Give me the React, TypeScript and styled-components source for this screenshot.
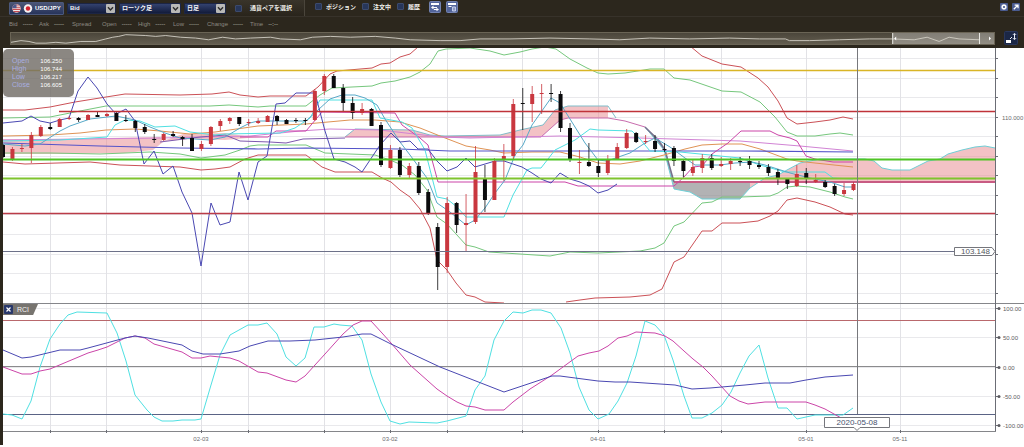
import React from "react";
import styled, { createGlobalStyle } from "styled-components";

const GlobalStyle = createGlobalStyle`
  *, *::before, *::after { box-sizing: border-box; }
  body {
    margin: 0;
    background: #fff;
    font-family: "Liberation Sans", "Noto Sans CJK JP", sans-serif;
  }
`;

const Frame = styled.main`
  background: #2c271d;
`;

const Toolbar = styled.div`
  display: flex;
  align-items: center;
  height: 17px;
  padding: 0 4px 0 9px;
  border-bottom: 1px solid #37322a;
`;

const PairButton = styled.button`
  display: flex;
  align-items: center;
  gap: 2px;
  width: 55px;
  height: 13px;
  padding: 0 2px;
  border: 1px solid #4b587c;
  border-radius: 1px;
  background: linear-gradient(#4b5576, #27345c);
  color: #fff;
  font: bold 6px "Liberation Sans", sans-serif;
  white-space: nowrap;
`;

const SelectBox = styled.label<{ $width: number }>`
  position: relative;
  display: flex;
  width: ${(p) => p.$width}px;
  height: 11px;
  margin-left: 3px;
  border: 1px solid #1c2544;
  background: linear-gradient(#33426f, #131c3c);

  svg {
    position: absolute;
    right: 0;
    top: 0;
    pointer-events: none;
  }
`;

const Select = styled.select`
  appearance: none;
  width: 100%;
  padding: 0 12px 0 2px;
  border: 0;
  background: transparent;
  color: #f2f2f5;
  font: bold 6px "Liberation Sans", "Noto Sans CJK JP", sans-serif;
`;

const PairPicker = styled.div`
  display: flex;
  align-items: center;
  align-self: stretch;
  width: 75px;
  margin-left: 4px;
  padding-left: 5px;
  background: linear-gradient(#39342a, #29241b);
  border-right: 1px solid #4a453b;
`;

const Checks = styled.div`
  display: flex;
  align-items: center;
  gap: 6px;
  padding: 0 9px 3px 10px;
`;

const CheckLabel = styled.label<{ $gap: number }>`
  display: flex;
  align-items: center;
  gap: ${(p) => p.$gap}px;
  color: #f0efec;
  font-size: 6px;
  font-weight: bold;
  line-height: 8px;
  white-space: nowrap;
`;

const CheckBox = styled.input`
  appearance: none;
  width: 7px;
  height: 7px;
  margin: 0;
  border: 1px solid #3c4a6c;
  border-radius: 1px;
  background: #27365a;

  &:checked { background: #6c82bd; }
`;

const IconButton = styled.button<{ $size: number }>`
  display: flex;
  flex: none;
  width: ${(p) => p.$size}px;
  height: ${(p) => p.$size}px;
  padding: 0;
  border: 0;
  background: transparent;

  svg { width: 100%; height: 100%; }
`;

const ToolGroup = styled.div<{ $gap: number }>`
  display: flex;
  gap: ${(p) => p.$gap}px;
  padding-bottom: 3px;
`;

const Spacer = styled.div`
  flex: 1;
`;

const QuoteRow = styled.dl`
  display: flex;
  align-items: center;
  height: 13px;
  margin: 0;
  padding-left: 9px;
  color: #8d8982;
  font-size: 6px;
  line-height: 8px;
  white-space: nowrap;
`;

const Quote = styled.div<{ $width: number }>`
  display: flex;
  gap: 5px;
  width: ${(p) => p.$width}px;

  dt, dd { margin: 0; }
  dd { font-weight: bold; }
`;

const OverviewRow = styled.div`
  display: flex;
  align-items: center;
  gap: 9px;
  height: 18px;
  padding: 0 6px 2px 10px;
`;

const Overview = styled.div`
  display: flex;
  flex: 1;
  height: 13px;
  border: 1px solid #6a6455;
  background: linear-gradient(#4b463b, #635d4f);

  svg { width: 100%; height: 100%; }
`;

const Charts = styled.section`
  margin-left: 3px;
  background: #fff;
`;

const Pane = styled.div`
  position: relative;

  > svg { display: block; width: 100%; height: auto; }
`;

const InfoPanel = styled.dl`
  position: absolute;
  left: 0;
  top: 1px;
  width: 71px;
  height: 48px;
  margin: 0;
  padding: 8px 12px 8px 9px;
  border-radius: 5px;
  background: rgba(113, 109, 102, 0.82);
  font-size: 6px;
`;

const InfoRow = styled.div`
  display: flex;
  justify-content: space-between;
  line-height: 8px;

  dt { color: #a9aee0; font-size: 7px; }
  dd { margin: 0; color: #fff; }
`;

const IndicatorTag = styled.div`
  position: absolute;
  left: 0;
  top: 1px;
  display: flex;
  align-items: center;
  gap: 4px;
  width: 35px;
  height: 11px;
  padding-left: 1px;
  background: #77746f;
  clip-path: polygon(0 0, 100% 0, 86% 100%, 0 100%);
  color: #f4f4f4;
  font-size: 7px;
`;

type Pt = [number, number];
type Line = { color: string; pts: string; w?: number };
// index, rising?, body top, body bottom, wick top, wick bottom
type Candle = [number, 0 | 1, number, number, number, number];

const candles: Candle[] = [
  [0, 0, 145, 157, 144, 158], [1, 1, 149, 159, 147, 161], [2, 1, 148, 149, 144, 152],
  [3, 1, 135, 148, 132, 163], [4, 1, 127, 136, 125, 137], [5, 0, 127, 129, 123, 130],
  [6, 1, 119, 127, 118, 127], [7, 1, 118, 119, 116, 120], [8, 0, 118, 120, 117, 122],
  [9, 1, 115, 120, 114, 120], [10, 0, 115, 117, 112, 117], [11, 1, 114, 116, 113, 117],
  [12, 0, 113, 121, 112, 121], [13, 0, 120, 121, 115, 122], [14, 0, 121, 128, 120, 132],
  [15, 0, 127, 132, 124, 134], [16, 0, 139, 140, 134, 143], [17, 1, 134, 140, 133, 141],
  [18, 0, 134, 136, 131, 137], [19, 0, 137, 139, 136, 146], [20, 0, 138, 151, 134, 151],
  [21, 1, 144, 149, 141, 151], [22, 1, 127, 144, 126, 146], [23, 1, 121, 126, 119, 131],
  [24, 1, 118, 121, 117, 124], [25, 0, 117, 124, 117, 126], [26, 1, 122, 123, 119, 126],
  [27, 1, 121, 123, 118, 124], [28, 1, 116, 122, 115, 122], [29, 0, 116, 121, 115, 125],
  [30, 0, 120, 124, 119, 124], [31, 0, 120, 121, 118, 123], [32, 0, 120, 121, 118, 125],
  [33, 1, 91, 120, 89, 121], [34, 1, 76, 91, 74, 95], [35, 0, 76, 88, 74, 88],
  [36, 0, 88, 103, 84, 111], [37, 0, 103, 113, 97, 119], [38, 1, 109, 113, 103, 115],
  [39, 0, 109, 126, 108, 126], [40, 0, 125, 165, 122, 167], [41, 1, 150, 168, 145, 169],
  [42, 0, 150, 175, 147, 177], [43, 1, 166, 175, 163, 178], [44, 0, 166, 193, 162, 195],
  [45, 0, 192, 214, 189, 215], [46, 0, 227, 267, 223, 290], [47, 1, 203, 267, 197, 273],
  [48, 0, 203, 225, 202, 233], [49, 1, 223, 225, 194, 252], [50, 1, 172, 222, 146, 224],
  [51, 0, 178, 200, 165, 212], [52, 1, 161, 200, 158, 200], [53, 1, 156, 160, 144, 181],
  [54, 1, 104, 156, 99, 159], [55, 0, 103, 104, 88, 130], [56, 1, 94, 104, 86, 122],
  [57, 1, 93, 94, 84, 114], [58, 0, 93, 94, 84, 102], [59, 0, 94, 128, 91, 132],
  [60, 0, 128, 159, 123, 162], [61, 1, 162, 163, 150, 174], [62, 0, 162, 166, 143, 167],
  [63, 0, 166, 173, 159, 177], [64, 1, 159, 173, 155, 175], [65, 1, 147, 159, 143, 159],
  [66, 1, 133, 148, 129, 149], [67, 0, 133, 142, 132, 143], [68, 1, 141, 142, 135, 144],
  [69, 0, 141, 149, 135, 152], [70, 0, 149, 150, 143, 152], [71, 0, 148, 161, 146, 166],
  [72, 0, 161, 171, 160, 177], [73, 1, 167, 173, 160, 176], [74, 1, 158, 168, 154, 173],
  [75, 0, 158, 168, 154, 170], [76, 1, 164, 166, 157, 167], [77, 1, 161, 164, 158, 170],
  [78, 0, 161, 162, 157, 166], [79, 0, 161, 165, 156, 169], [80, 0, 165, 167, 161, 169],
  [81, 0, 167, 173, 164, 176], [82, 0, 172, 178, 169, 185], [83, 0, 179, 184, 178, 189],
  [84, 1, 174, 186, 165, 187], [85, 0, 173, 178, 168, 184], [86, 1, 180, 182, 174, 183],
  [87, 0, 182, 187, 180, 188], [88, 0, 186, 194, 184, 196], [89, 1, 190, 194, 183, 196],
  [90, 1, 184, 190, 182, 191],
];

const RED = "#cb5157";
const GREEN = "#76c77d";
const CYAN = "#4fe0e2";
const MAGENTA = "#cb45a8";
const NAVY = "#4a48b2";

const priceLines: Line[] = [
  { color: RED, pts: "3,110 25,110 50,107 75,102 106,97 125,94 180,95 212,94 229,92 240,95 258,97 270,96 306,96 318,87 330,74 337,71 372,68 381,64 390,63 400,57 410,54 418,47" },
  { color: RED, pts: "690,46 702,56 712,60 722,64 741,67 758,78 768,87 778,101 787,118 797,124 815,122 830,120 843,117 853,119" },
  { color: GREEN, pts: "3,118 50,117 80,111 106,106 210,106 229,105 258,107 270,106 306,106 320,95 332,88 372,86 381,83 395,81 410,77 420,72 430,64 438,51 446,49 470,48 490,51 504,55 520,52 532,49 545,47 556,49 570,59 587,68 598,73 608,74 625,73 650,69 664,69 674,78 690,80 722,91 741,92 760,102 775,117 787,132 797,136 815,136 830,134 840,133 853,135" },
  { color: RED, pts: "3,162 25,164 90,162 120,165 180,167 201,170 215,169 230,167 245,159 258,155 306,155 322,167 335,172 372,172 382,178 391,182 400,190 410,197 420,209 430,228 437,260 447,270 456,283 466,295 475,297 485,302 504,303" },
  { color: RED, pts: "566,302 580,300 595,298 630,297 650,295 662,289 674,262 684,257 702,231 712,231 722,223 740,223 758,221 770,216 778,211 787,200 797,198 815,202 830,207 845,214 853,215" },
  { color: GREEN, pts: "3,153 50,153 100,154 125,153 150,152 180,154 201,158 225,155 240,150 250,146 258,145 306,145 325,153 375,155 390,160 402,165 415,175 427,190 437,217 447,224 466,245 475,247 489,252 520,254 550,256 570,252 598,253 640,251 655,248 664,243 674,226 684,222 702,203 712,202 722,197 740,197 770,196 778,193 787,187 797,186 810,187 830,192 845,197 853,199" },
  { color: "#df9355", pts: "3,136 50,135 80,133 106,130 135,129 160,131 190,134 215,132 258,126 306,124 350,120 375,120 400,122 420,128 440,136 466,146 490,150 504,153 532,152 560,152 580,157 598,163 620,164 640,161 664,155 685,149 702,145 722,144 742,144 760,149 787,159 797,161 815,163 853,167" },
  { color: "#d183d4", pts: "3,140 80,139 160,138 250,136 300,131 330,129 380,130 440,137 470,138 560,136 600,137 640,138 740,141 800,146 853,151" },
  { color: "#5454c9", w: 1.2, pts: "3,143 100,146 180,148 258,149 306,148 400,149 450,151 600,151 740,151 853,152" },
  { color: "#7d58ae", pts: "160,142 200,137 225,135 240,141 270,142 286,143 303,139 345,138" },
  { color: MAGENTA, pts: "240,137 268,137 276,131 306,131 322,112 395,113 402,125 420,138 428,145 438,182 565,182 578,186 674,186 684,177 693,167 702,166 712,154 728,143 741,131 770,131 778,135 790,138 797,141 806,156 815,159 833,162 853,162" },
  { color: CYAN, pts: "3,141 60,140 107,137 115,125 125,120 140,121 155,127 175,126 190,132 215,135 225,134 280,133 295,128 310,118 320,100 372,100 380,118 402,122 412,128 425,150 437,197 447,199 457,207 466,217 504,217 513,195 527,170 532,168 541,168 555,150 575,140 590,129 598,130 632,131 640,139 650,151 680,152 720,156 740,158 760,165 785,172 825,172 833,178 853,179" },
  { color: "#57a9c8", pts: "3,144 25,146 40,144 60,131 70,126 90,119 116,116 135,120 150,127 165,133 180,138 210,140 225,137 240,128 250,123 258,121 306,121 318,110 330,99 342,95 355,95 365,98 377,105 385,119 400,142 410,155 427,178 437,203 450,212 466,225 475,220 485,208 495,193 505,180 515,155 523,145 532,125 551,98 560,103 575,127 585,143 598,160 607,161 630,153 645,143 655,138 670,147 685,158 695,165 720,165 735,163 752,162 765,165 790,173 810,178 830,182 845,187 853,187" },
  { color: NAVY, pts: "3,123 22,121 31,116 40,121 50,123 60,120 69,118 78,91 88,77 97,88 107,104 116,114 126,109 135,121 144,164 154,151 163,174 173,166 182,192 192,213 201,266 211,203 220,225 230,222 239,172 248,200 258,162 267,156 276,104 285,103 296,93 315,93 325,131 334,159 345,162 355,167 362,172 370,160 380,145 391,133 400,142 410,141 418,149 428,149 437,161 447,171 457,167 466,158 475,167 495,161 504,161 522,167 532,173 541,179 551,183 560,173 570,179 580,182 589,186 598,193 608,190 617,184" },
];

const rciLines: Line[] = [
  { color: CYAN, pts: "3,414 12,415 22,419 31,401 40,367 50,339 60,324 68,315 77,312 107,313 117,333 126,361 135,395 147,410 154,417 162,421 173,421 182,420 195,420 201,419 211,385 220,355 230,335 248,325 258,325 267,323 277,334 286,357 296,366 305,358 314,327 324,327 334,324 340,325 352,326 362,340 371,374 381,402 390,421 400,424 409,422 437,423 447,421 466,416 475,390 485,376 494,340 504,321 513,312 523,313 532,310 541,310 551,313 561,328 570,353 579,387 589,410 598,419 609,414 618,401 627,383 636,356 645,321 655,325 664,335 673,360 684,396 692,418 702,418 712,413 722,405 731,392 740,373 749,356 759,345 768,378 778,408 787,408 797,419 815,415 843,415 853,408" },
  { color: MAGENTA, pts: "3,367 22,374 31,374 40,371 50,369 69,361 88,353 98,350 107,347 125,338 135,336 145,338 154,344 182,352 192,358 201,358 210,356 230,358 239,361 258,372 267,373 286,380 296,382 305,376 325,354 343,334 353,325 362,321 371,321 382,333 391,343 410,365 428,381 437,389 447,396 457,402 466,406 475,407 485,410 504,410 513,402 530,389 552,375 578,356 589,353 599,351 608,346 618,338 627,336 636,332 655,333 665,336 673,341 684,351 693,359 703,367 712,376 730,396 739,401 748,404 765,402 806,402 815,405 825,409 843,419" },
  { color: NAVY, pts: "3,350 22,358 31,357 60,350 80,350 88,348 125,338 135,336 148,338 182,345 192,351 203,354 220,354 239,351 250,346 268,341 290,341 315,340 343,337 362,334 371,334 391,344 440,367 504,392 552,376 560,376 598,381 615,382 630,382 675,385 692,389 710,388 745,385 765,383 790,383 806,380 825,377 853,375" },
];

const overviewWave =
  "0,11 10,9 18,10 25,12 35,12 45,11 55,12 70,10 85,10 95,7 102,5 108,4 115,2 135,3 145,4 155,3 170,5 185,6 198,8 212,5 225,7 240,6 260,5 270,7 290,8 302,5 320,4 340,5 365,4 385,6 400,8 430,9 450,9 470,7 500,7 540,6 580,7 610,8 640,6 680,7 720,6 750,7 776,7 780,9 800,9 830,8 860,7 883,7 905,8 918,5 930,10 940,5 950,7 970,8";

const gridX = [50, 106, 201, 248, 324, 390, 447, 522, 598, 664, 721, 806, 900];
const priceGridY = [58, 78, 97, 117, 136, 156, 175, 195, 214, 234, 254, 273, 293];
const rciScale: [number, string][] = [
  [308, "100.00"],
  [337, "50.00"],
  [367, "0.00"],
  [396, "-50.00"],
  [425, "-100.00"],
];
const dates: Pt[] = [[201, 0], [390, 1], [598, 2], [806, 3], [900, 4]];
const dateNames = ["02-03", "03-02", "04-01", "05-01", "05-11"];

const AXIS = "#6b6d75";

const Polyline = ({ line }: { line: Line }) => (
  <polyline points={line.pts} fill="none" stroke={line.color} strokeWidth={line.w ?? 1} strokeLinejoin="round" />
);

const HLine = ({ y, color, from = 3, to = 995, w = 1 }: { y: number; color: string; from?: number; to?: number; w?: number }) => (
  <line x1={from} x2={to} y1={y + 0.5} y2={y + 0.5} stroke={color} strokeWidth={w} />
);

const VLine = ({ x, color, from, to }: { x: number; color: string; from: number; to: number }) => (
  <line x1={x + 0.5} x2={x + 0.5} y1={from} y2={to} stroke={color} />
);

const CandleMark = ({ c }: { c: Candle }) => {
  const [i, up, top, bottom, high, low] = c;
  const x = 3 + i * 9.45;
  const color = up ? "#c9373f" : "#0b0b0d";
  return (
    <g fill={color}>
      <line x1={x} x2={x} y1={high} y2={low} stroke={color} strokeWidth={0.8} />
      <rect x={x - 2} y={top} width={4} height={bottom - top} />
    </g>
  );
};

const PriceChart = () => (
  <svg viewBox="3 48 1021 255" role="img" aria-label="USD/JPY" fontFamily="Liberation Sans, sans-serif">
    {priceGridY.map((y) => <HLine key={y} y={y} color="#e9e9ec" />)}
    {gridX.map((x) => <VLine key={x} x={x} color="#e2e2e6" from={48} to={303} />)}

    <g fill="#e98f95" fillOpacity="0.55">
      <path d="M3 139 60 139 107 138 160 137 163 142 153 150 125 153 60 154 3 154Z" />
      <path d="M163 141 183 134 225 133 245 136 260 137 225 140 192 139Z" />
      <path d="M345 137 355 129 412 130 430 135 445 136 500 135 520 130 543 125 555 110 568 106 608 106 608 118 568 118 560 120 551 128 541 137Z" />
      <path d="M750 188 765 178 778 175 787 170 800 163 820 159 865 159 874 161 882 168 892 170 910 170 928 161 940 159 948 154 962 150 975 147 985 146 995 148 995 182 750 182Z" />
    </g>
    <path d="M645 127 658 138 665 148 674 182 750 182 750 188 740 199 702 199 690 192 674 189 664 150Z" fill="#8d8d90" fillOpacity="0.68" />
    <polyline points="345,137 355,129 412,130 430,135 445,136 500,135 520,130 543,125 555,110 568,106 608,106 616,118" fill="none" stroke="#7fbcc8" />
    <polyline points="345,137 541,137 551,128 560,120 568,118 608,118 625,121 645,127" fill="none" stroke="#c86cae" />
    <polyline points="645,127 664,150 674,189 690,192 702,199 740,199 750,188 765,178 778,175 787,170 800,163 820,159 865,159 874,161 882,168 892,170 910,170 928,161 940,159 948,154 962,150 975,147 985,146 995,148" fill="none" stroke="#6fcfd6" />
    <polyline points="674,182 995,182" fill="none" stroke="#c85b83" strokeWidth="2" />
    <polyline points="645,127 658,140 665,150 674,182" fill="none" stroke="#77718f" strokeWidth="1.5" />

    {priceLines.map((l) => <Polyline key={l.pts} line={l} />)}
    {candles.map((c) => <CandleMark key={c[0]} c={c} />)}

    <HLine y={70} color="#d9b526" w={1.6} />
    <HLine y={111} color="#bf3339" from={59} w={1.4} />
    <HLine y={159} color="#4fc425" w={1.8} />
    <HLine y={178} color="#7fc42e" w={1.8} />
    <HLine y={213} color="#bb3c48" w={1.4} />
    <HLine y={251} color="#6d7189" to={955} />

    <VLine x={857} color="#77787c" from={48} to={303} />
    <VLine x={995} color={AXIS} from={48} to={303} />
    {priceGridY.map((y) => <HLine key={y} y={y} color={AXIS} from={996} to={998} />)}
    <path d="M954.5 247.500H992L995 251.500 992 255.500H954.500Z" fill="#fff" stroke="#75767c" />
    <text x="961" y="254" fontSize="8" fill="#55575e">103.148</text>
    <text x="1002" y="120" fontSize="6" fill="#6b6b6f">110.000</text>
  </svg>
);

const RciChart = () => (
  <svg viewBox="3 303 1021 142" role="img" aria-label="RCI" fontFamily="Liberation Sans, sans-serif">
    {rciScale.map(([y]) => <HLine key={y} y={y} color="#e9e9ec" />)}
    {gridX.map((x) => <VLine key={x} x={x} color="#e2e2e6" from={303} to={431} />)}
    <HLine y={303} color="#85868a" to={1024} />
    <HLine y={320} color="#b9686c" />
    <HLine y={366} color="#8b8b8d" />
    <HLine y={414} color="#5a6385" />
    {rciLines.map((l) => <Polyline key={l.pts} line={l} />)}

    <VLine x={857} color="#77787c" from={303} to={414} />
    <VLine x={995} color={AXIS} from={303} to={431} />
    <HLine y={431} color="#85868a" to={996} />
    {gridX.map((x) => <VLine key={x} x={x} color={AXIS} from={430} to={433} />)}

    {rciScale.map(([y, label]) => (
      <g key={label} fill="#5b5b60">
        <HLine y={y} color={AXIS} from={996} to={999} />
        <circle cx="999" cy={y + 0.5} r="1.5" />
        <text x="1003" y={y + 3} fontSize="6">{label}</text>
      </g>
    ))}
    {dates.map(([x, n]) => (
      <text key={x} x={x} y="441" fontSize="6" fill="#6b6b6f" textAnchor="middle">{dateNames[n]}</text>
    ))}
    <path d="M824.5 417.500H889.500V427.500H860L857 430.500 854 427.500H824.500Z" fill="#fff" stroke="#75767c" />
    <text x="857" y="425" fontSize="8" fill="#45506d" textAnchor="middle">2020-05-08</text>
  </svg>
);

const Flags = () => (
  <svg width="21" height="9" viewBox="0 0 21 9" aria-hidden="true">
    <defs>
      <clipPath id="us"><circle cx="4.500" cy="4.500" r="4.200" /></clipPath>
    </defs>
    <g clipPath="url(#us)">
      <rect width="9" height="9" fill="#f2e8e8" />
      <path d="M0 1H9M0 3.200H9M0 5.400H9M0 7.600H9" stroke="#c44a50" strokeWidth="1.100" />
      <rect width="4.500" height="4.200" fill="#4d5a8e" />
    </g>
    <circle cx="16" cy="4.500" r="4.200" fill="#f5f1f1" />
    <circle cx="16" cy="4.500" r="2.200" fill="#d3202c" />
  </svg>
);

const DropArrow = () => (
  <svg width="9" height="9" viewBox="0 0 9 9" aria-hidden="true">
    <rect width="9" height="9" rx="1" fill="#b9b9b7" />
    <path d="M2 3.200 4.500 6 7 3.200" fill="none" stroke="#2d2d2d" strokeWidth="1.400" />
  </svg>
);

const ToolIcon = ({ kind }: { kind: "reset" | "delete" }) => (
  <svg viewBox="0 0 12 12" aria-hidden="true">
    <rect x="0.500" y="0.500" width="11" height="11" rx="1" fill="#53659b" stroke="#7382b0" />
    <path d="M2 3H10" stroke="#fff" strokeWidth="2" fill="none" />
    {kind === "reset" ? (
      <>
        <path d="M2 6.500 4.500 4.500V6H8V7H4.500V8.500Z" fill="#fff" />
        <path d="M10 8.500 7.500 6.800V8H5V9H7.500V10.300Z" fill="#fff" />
      </>
    ) : (
      <>
        <path d="M2.500 5.500H5.500" stroke="#fff" fill="none" />
        <path d="M6.500 6H9.500V10H6.500ZM8 6V10" stroke="#cdd6f0" fill="none" strokeWidth="0.900" />
      </>
    )}
  </svg>
);

const GearIcon = () => (
  <svg viewBox="0 0 9 9" aria-hidden="true">
    <rect width="9" height="9" rx="1" fill="#4a5b90" />
    <circle cx="4.500" cy="4.500" r="2" fill="none" stroke="#fff" strokeWidth="1.500" />
    <path d="M4.500 1V2M4.500 7V8M1 4.500H2M7 4.500H8M2 2 2.700 2.700M6.300 6.300 7 7M7 2 6.300 2.700M2.700 6.300 2 7" stroke="#fff" strokeWidth="1.200" />
  </svg>
);

const PopOutIcon = () => (
  <svg viewBox="0 0 9 9" aria-hidden="true">
    <rect width="9" height="9" rx="1" fill="#4a5b90" />
    <path d="M2 7 6.500 2.500M3 2.300H6.800V6" fill="none" stroke="#fff" strokeWidth="1.400" />
  </svg>
);

const ScaleIcon = () => (
  <svg viewBox="0 0 14 14" aria-hidden="true">
    <rect x="0.500" y="0.500" width="13" height="13" rx="1" fill="#1b2746" stroke="#29365b" />
    <path d="M2 9H7V12H2Z" fill="#fff" />
    <path d="M6 8 8 6M10.500 3V8M9 3.800 10.500 2.300 12 3.800M9 7.200 10.500 8.700 12 7.200" fill="none" stroke="#e8ecf5" />
  </svg>
);

const quotes: { name: string; value: string; width: number }[] = [
  { name: "Bid", value: "-----", width: 30 },
  { name: "Ask", value: "-----", width: 33 },
  { name: "Spread", value: "", width: 30 },
  { name: "Open", value: "-----", width: 36 },
  { name: "High", value: "-----", width: 35 },
  { name: "Low", value: "-----", width: 34 },
  { name: "Change", value: "-----", width: 43 },
  { name: "Time", value: "--:--", width: 40 },
];

const ohlc = [["Open", "106.250"], ["High", "106.744"], ["Low", "106.217"], ["Close", "106.605"]];

const Dropdown = ({ label, option, width }: { label: string; option: string; width: number }) => (
  <SelectBox $width={width}>
    <Select aria-label={label} defaultValue={option}>
      <option>{option}</option>
    </Select>
    <DropArrow />
  </SelectBox>
);

const Check = ({ text, gap = 6 }: { text: string; gap?: number }) => (
  <CheckLabel $gap={gap}>
    <CheckBox type="checkbox" />
    {text}
  </CheckLabel>
);

export default function App() {
  return (
    <>
      <GlobalStyle />
      <Frame>
        <Toolbar>
          <PairButton type="button"><Flags />USD/JPY</PairButton>
          <Dropdown label="Price" option="Bid" width={49} />
          <Dropdown label="Chart type" option="ローソク足" width={62} />
          <Dropdown label="Period" option="日足" width={42} />
          <PairPicker><Check text="通貨ペアを選択" gap={8} /></PairPicker>
          <Checks>
            <Check text="ポジション" gap={4} />
            <Check text="注文中" gap={4} />
            <Check text="履歴" gap={4} />
          </Checks>
          <ToolGroup $gap={5}>
            <IconButton type="button" $size={12} aria-label="Reset drawings"><ToolIcon kind="reset" /></IconButton>
            <IconButton type="button" $size={12} aria-label="Delete drawings"><ToolIcon kind="delete" /></IconButton>
          </ToolGroup>
          <Spacer />
          <ToolGroup $gap={4}>
            <IconButton type="button" $size={8} aria-label="Settings"><GearIcon /></IconButton>
            <IconButton type="button" $size={8} aria-label="Open in a window"><PopOutIcon /></IconButton>
          </ToolGroup>
        </Toolbar>

        <QuoteRow>
          {quotes.map((q) => (
            <Quote key={q.name} $width={q.width}>
              <dt>{q.name}</dt>
              <dd>{q.value}</dd>
            </Quote>
          ))}
        </QuoteRow>

        <OverviewRow>
          <Overview>
            <svg viewBox="0 0 985 13" preserveAspectRatio="none" aria-hidden="true">
              <rect x="883" width="102" height="13" fill="#fff" fillOpacity="0.3" />
              <polyline points={overviewWave} fill="none" stroke="#cfccc2" />
              <path d="M883.500 0V13M970.500 0V13" stroke="#f2f2ee" />
              <path d="M887 4V9L885 6.500ZM980 4V9L982 6.500Z" fill="#fff" />
            </svg>
          </Overview>
          <IconButton type="button" $size={14} aria-label="Fit scale"><ScaleIcon /></IconButton>
        </OverviewRow>

        <Charts>
          <Pane>
            <PriceChart />
            <InfoPanel>
              {ohlc.map(([name, value]) => (
                <InfoRow key={name}>
                  <dt>{name}</dt>
                  <dd>{value}</dd>
                </InfoRow>
              ))}
            </InfoPanel>
          </Pane>
          <Pane>
            <RciChart />
            <IndicatorTag>
              <IconButton type="button" $size={9} aria-label="Close RCI">
                <svg viewBox="0 0 9 9" aria-hidden="true">
                  <rect width="9" height="9" rx="1" fill="#28386b" />
                  <path d="M2.500 2.500 6.500 6.500M6.500 2.500 2.500 6.500" stroke="#fff" strokeWidth="1.200" />
                </svg>
              </IconButton>
              RCI
            </IndicatorTag>
          </Pane>
        </Charts>
      </Frame>
    </>
  );
}
